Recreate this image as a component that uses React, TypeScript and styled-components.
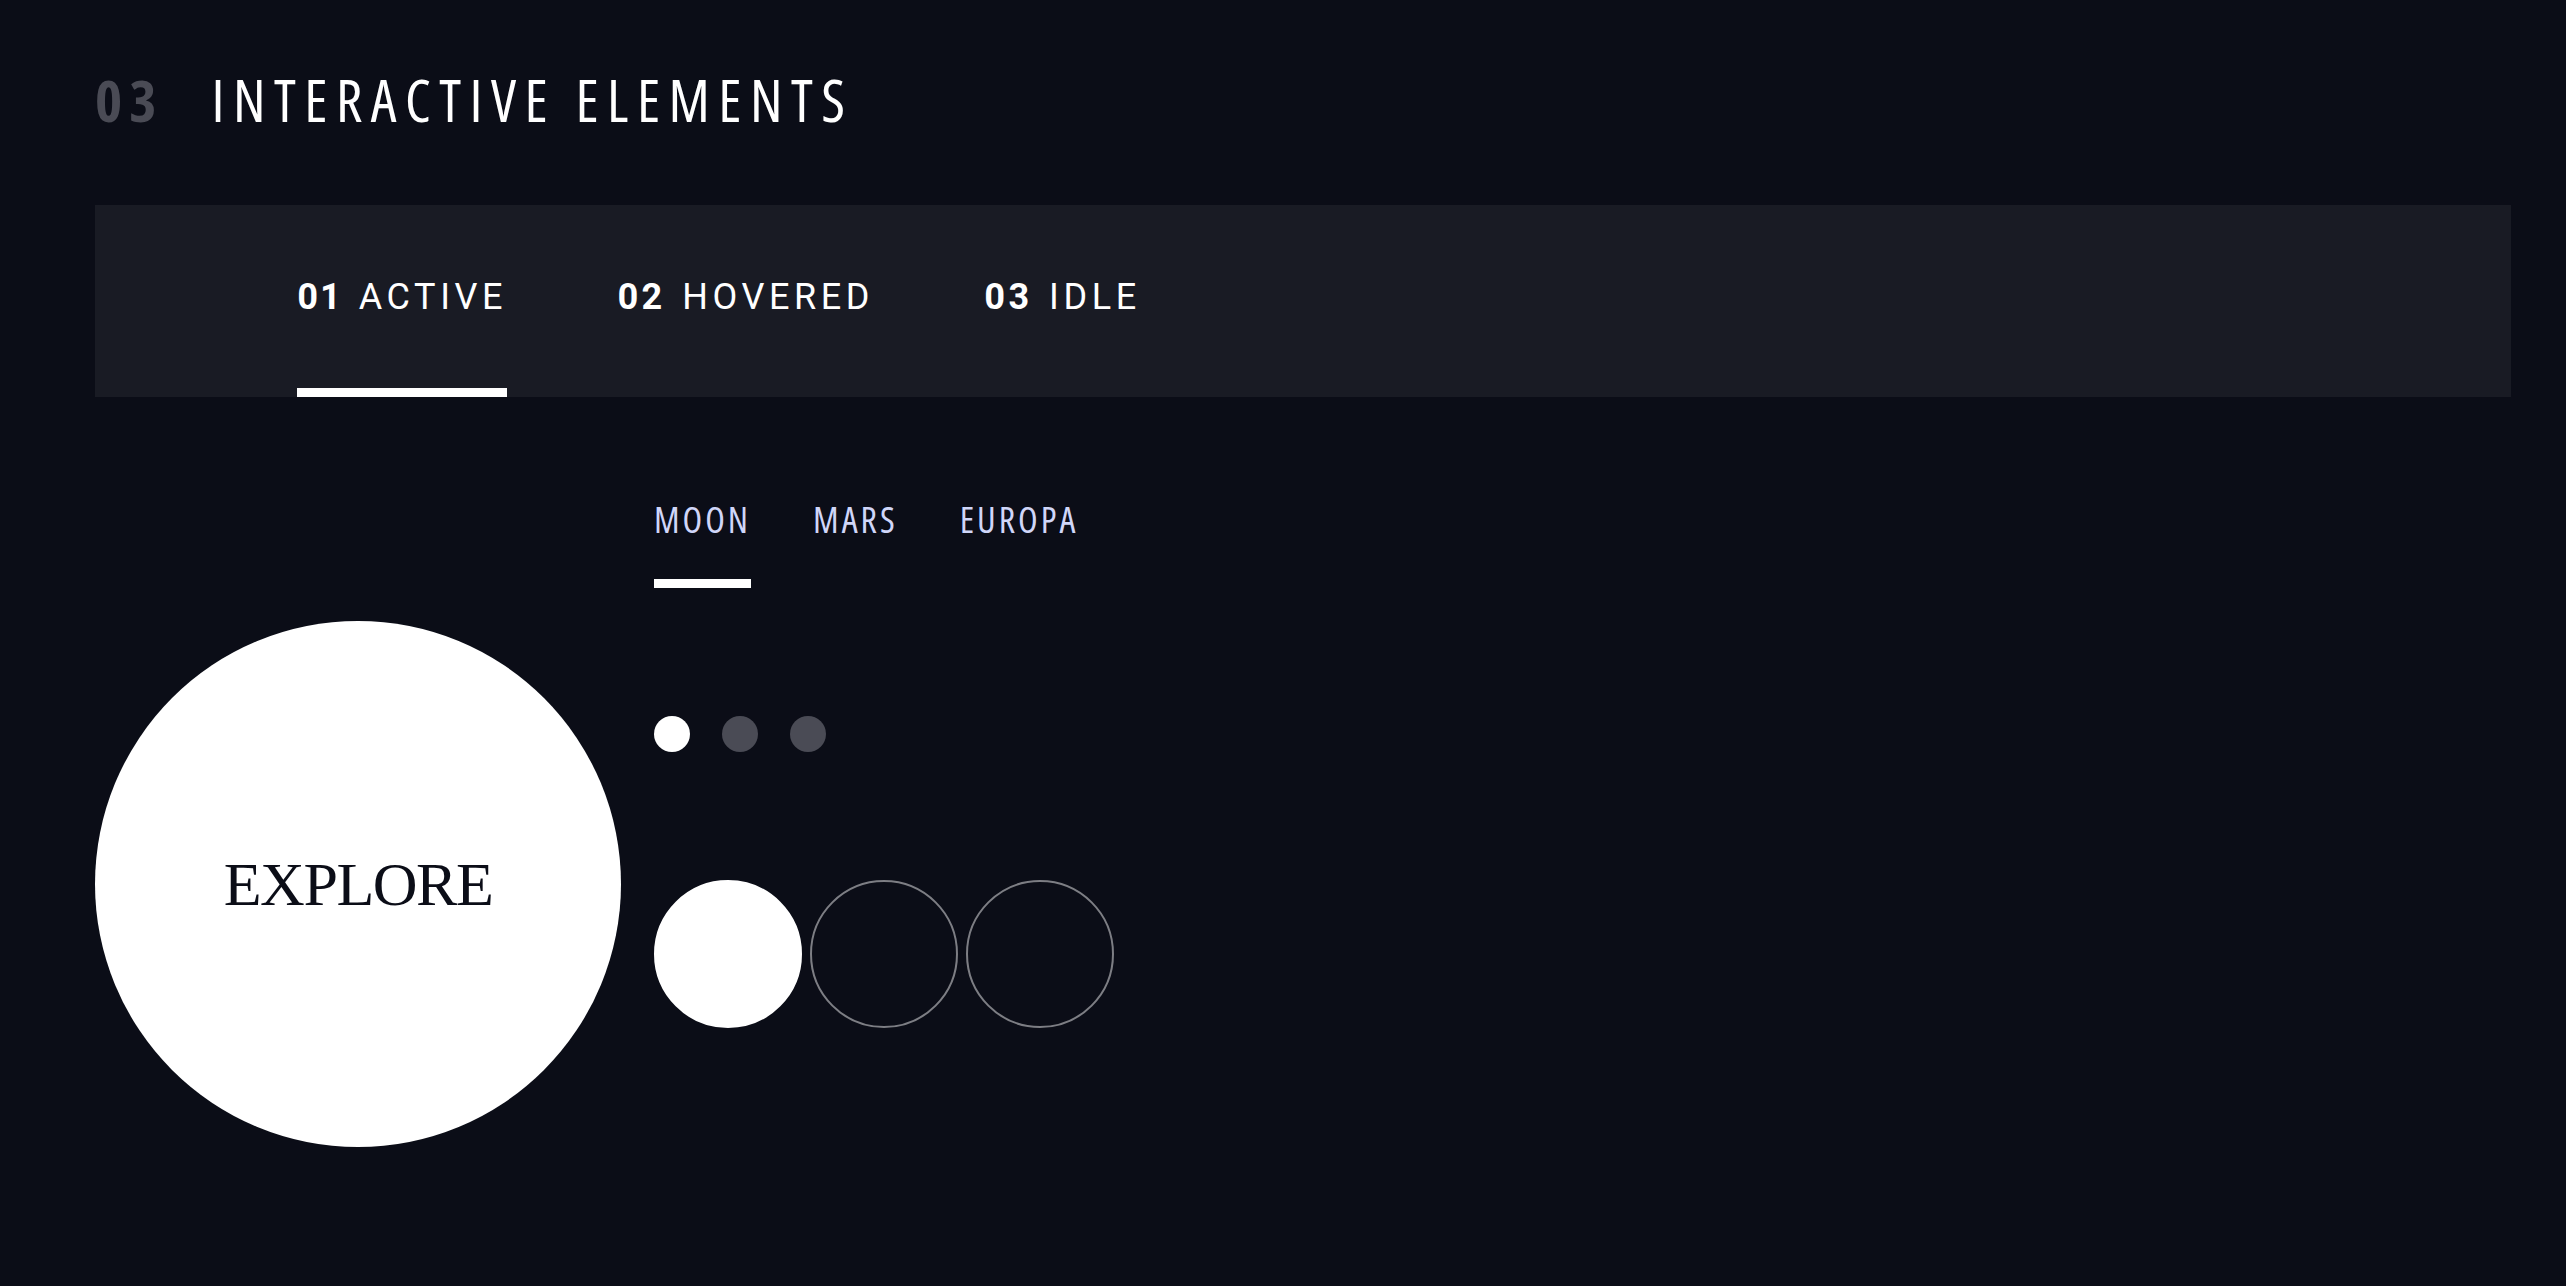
import React from "react";
import styled, { createGlobalStyle } from "styled-components";

const Global = createGlobalStyle`
  html, body { margin: 0; padding: 0; background: #0b0d17; }
  * { box-sizing: border-box; }
`;

const condensed = `
  font-family: "Open Sans", "Roboto", "Liberation Sans", sans-serif;
  font-stretch: 75%;
`;

const Page = styled.main`
  min-height: 100vh;
  background: #0b0d17;
  padding: 71px 55px 0 95px;
  color: #fff;
`;

const Heading = styled.h2`
  ${condensed}
  margin: 0 0 76px;
  display: flex;
  align-items: baseline;
  font-size: 58px;
  line-height: 1;
  font-weight: 400;
  letter-spacing: 8.5px;
  text-transform: uppercase;
`;

const HeadingNum = styled.span`
  font-weight: 700;
  letter-spacing: 7px;
  color: #4a4b55;
  margin-right: 48px;
`;

const HeadingTitle = styled.span`
  color: #ffffff;
`;

const TabBar = styled.nav`
  height: 192px;
  background: #191b24;
  padding-left: 202px;
  display: flex;
  align-items: stretch;
  gap: 110px;
`;

const Tab = styled.div<{ $active?: boolean }>`
  height: 100%;
  display: flex;
  align-items: center;
  border-bottom: 9px solid ${(p) => (p.$active ? "#ffffff" : "transparent")};
  font-family: "Roboto", "Liberation Sans", sans-serif;
  font-size: 36px;
  line-height: 1;
  letter-spacing: 4.6px;
  color: #ffffff;
  text-transform: uppercase;
`;

const TabNum = styled.span`
  font-weight: 700;
  font-variant-numeric: proportional-nums;
  letter-spacing: 3px;
  margin-right: 17px;
`;

const TabLabel = styled.span`
  font-weight: 400;
`;

const Showcase = styled.section`
  margin-top: 105px;
  display: flex;
  align-items: flex-start;
  gap: 33px;
`;

const ExploreButton = styled.div`
  margin-top: 119px;
  width: 526px;
  height: 526px;
  border-radius: 50%;
  background: #ffffff;
  display: grid;
  place-items: center;
  font-family: "Liberation Serif", "DejaVu Serif", serif;
  font-size: 62px;
  letter-spacing: -1.5px;
  color: #0b0d17;
  text-transform: uppercase;
  line-height: 1;
`;

const Controls = styled.div`
  display: flex;
  flex-direction: column;
  align-items: flex-start;
  gap: 128px;
`;

const SubNav = styled.div`
  display: flex;
  gap: 62px;
`;

const SubTab = styled.div<{ $active?: boolean }>`
  ${condensed}
  font-size: 36px;
  line-height: 1;
  letter-spacing: 3px;
  color: #d0d6f9;
  text-transform: uppercase;
  padding-bottom: 41px;
  border-bottom: 9px solid ${(p) => (p.$active ? "#ffffff" : "transparent")};
`;

const Dots = styled.div`
  display: flex;
  gap: 32px;
`;

const Dot = styled.span<{ $active?: boolean }>`
  width: 36px;
  height: 36px;
  border-radius: 50%;
  background: ${(p) => (p.$active ? "#ffffff" : "#4a4b55")};
`;

const Pager = styled.div`
  display: flex;
  gap: 8px;
`;

const PageCircle = styled.span<{ $active?: boolean }>`
  width: 148px;
  height: 148px;
  border-radius: 50%;
  background: ${(p) => (p.$active ? "#ffffff" : "transparent")};
  border: 2px solid ${(p) => (p.$active ? "#ffffff" : "#7d7e84")};
`;

const tabs = [
  { num: "01", label: "Active", active: true },
  { num: "02", label: "Hovered" },
  { num: "03", label: "Idle" },
];

const destinations = [
  { name: "Moon", active: true },
  { name: "Mars" },
  { name: "Europa" },
];

export default function App() {
  return (
    <>
      <Global />
      <Page>
        <Heading>
          <HeadingNum>03</HeadingNum>
          <HeadingTitle>Interactive elements</HeadingTitle>
        </Heading>

        <TabBar>
          {tabs.map((t) => (
            <Tab key={t.num} $active={t.active}>
              <TabNum>{t.num}</TabNum>
              <TabLabel>{t.label}</TabLabel>
            </Tab>
          ))}
        </TabBar>

        <Showcase>
          <ExploreButton>Explore</ExploreButton>
          <Controls>
            <SubNav>
              {destinations.map((d) => (
                <SubTab key={d.name} $active={d.active}>
                  {d.name}
                </SubTab>
              ))}
            </SubNav>
            <Dots>
              <Dot $active />
              <Dot />
              <Dot />
            </Dots>
            <Pager>
              <PageCircle $active />
              <PageCircle />
              <PageCircle />
            </Pager>
          </Controls>
        </Showcase>
      </Page>
    </>
  );
}
